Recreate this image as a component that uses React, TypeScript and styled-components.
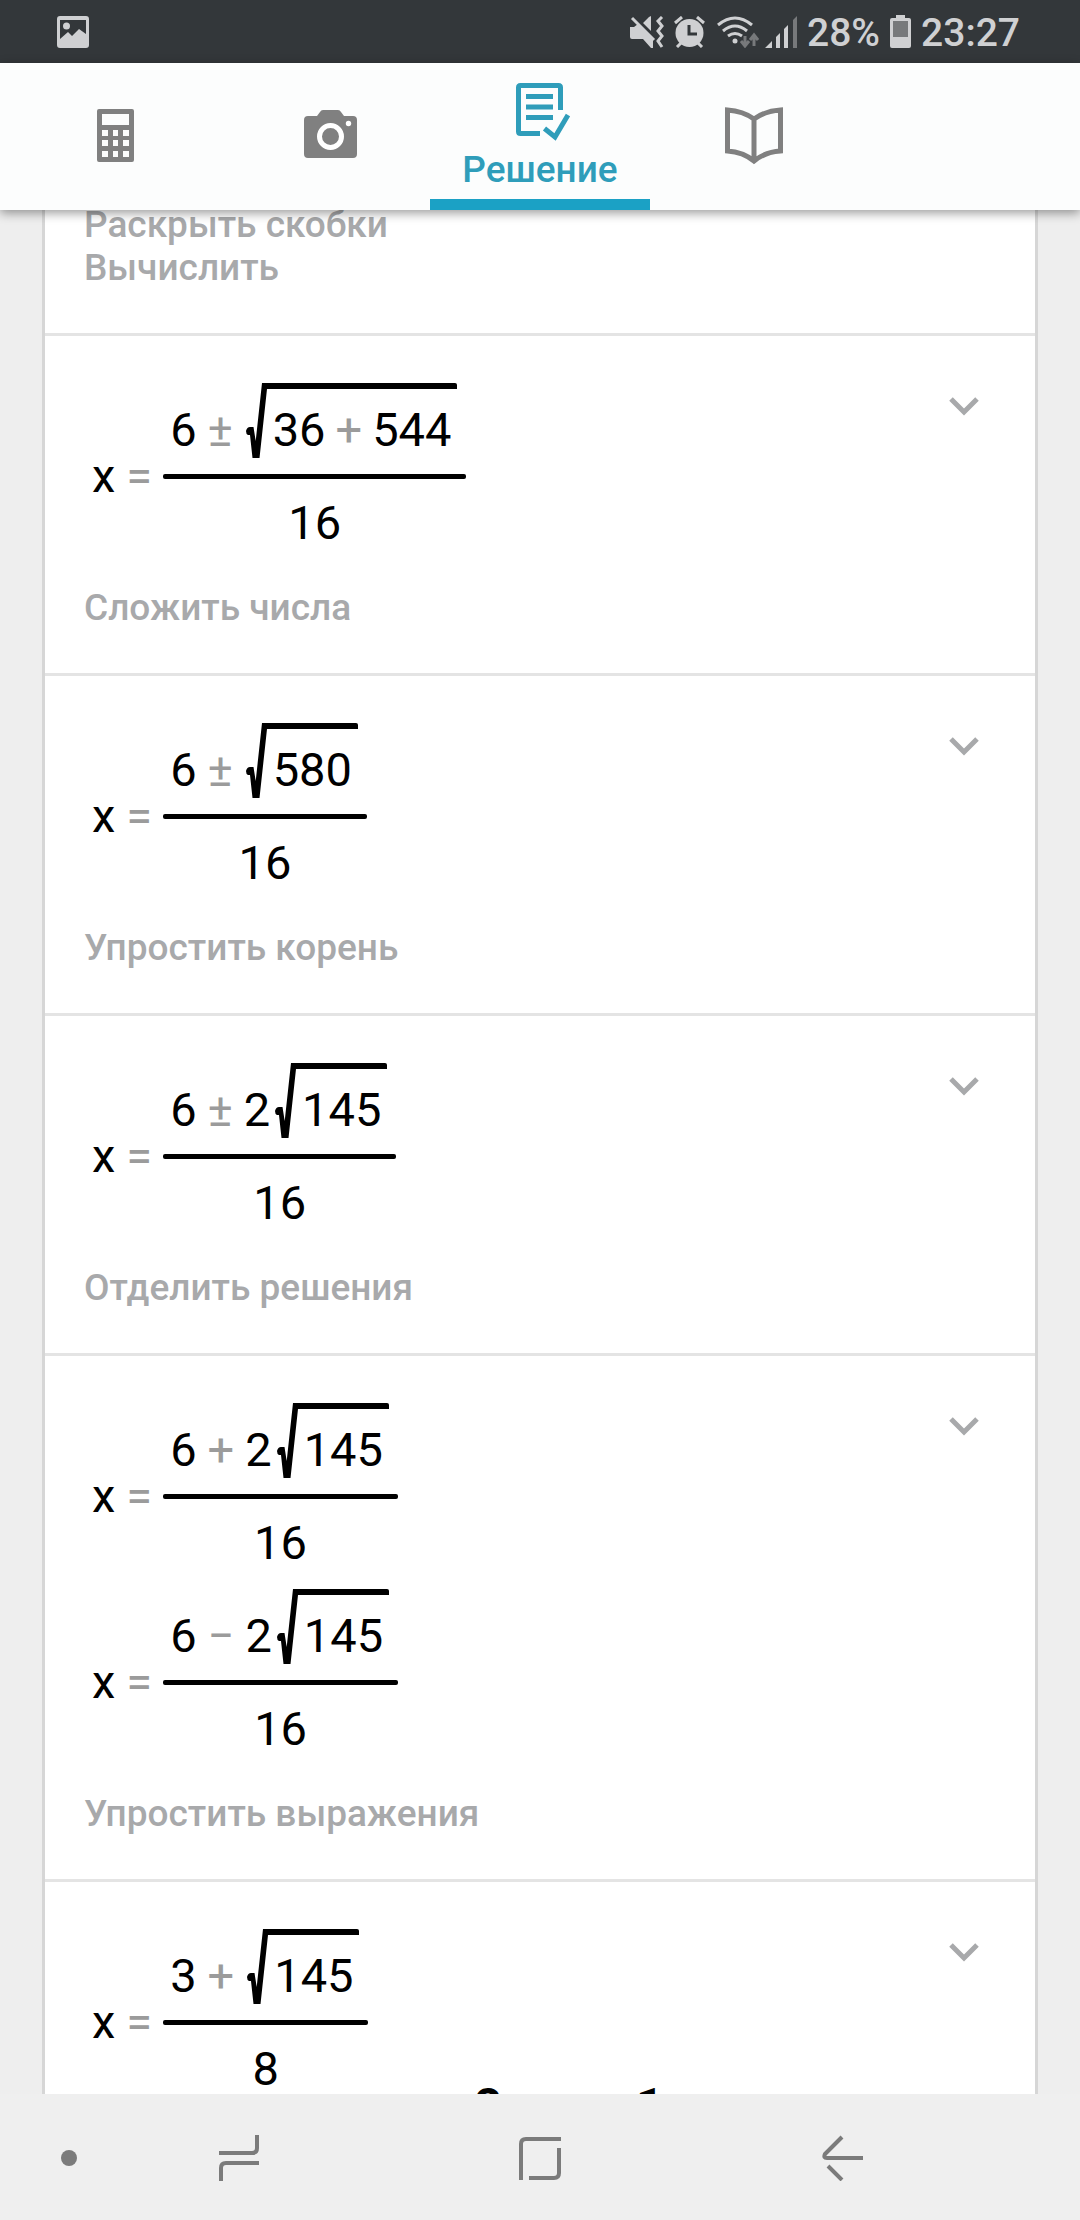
import React from "react";
import styled, { createGlobalStyle } from "styled-components";

const GlobalStyle = createGlobalStyle`
  * { box-sizing: border-box; }
  body { margin: 0; background: #eeeeee; font-family: Roboto, "Noto Sans", sans-serif; }
  button { border: 0; padding: 0; background: none; font: inherit; color: inherit; cursor: pointer; }
  svg { display: block; flex: none; }
`;

const Screen = styled.div`
  display: flex;
  flex-direction: column;
  height: 100vh;
  overflow: hidden;
`;

/* status bar */
const StatusBar = styled.div`
  flex: none;
  display: flex;
  align-items: center;
  justify-content: space-between;
  height: 63px;
  padding: 0 60px 0 57px;
  background: #33373a;
  color: #cfd0d2;
`;
const StatusGroup = styled.div<{ $gap: number }>`
  display: flex;
  align-items: center;
  gap: ${(p) => p.$gap}px;
`;
const StatusText = styled.span`
  font-size: 39px;
  font-weight: 500;
  line-height: 48px;
  padding-top: 2px;
`;

/* tabs */
const Tabs = styled.nav`
  flex: none;
  position: relative;
  z-index: 1;
  display: grid;
  grid-template-columns: 230fr 200fr 220fr 207fr 223fr;
  height: 147px;
  background: #fcfdfd;
  box-shadow: 0 3px 10px rgba(0, 0, 0, 0.4);
`;
const Tab = styled.button<{ $active?: boolean }>`
  display: flex;
  flex-direction: column;
  align-items: center;
  justify-content: ${(p) => (p.$active ? "flex-end" : "center")};
  gap: 8px;
  padding-bottom: ${(p) => (p.$active ? "0" : "2px")};
  color: ${(p) => (p.$active ? "#2f9dba" : "#808080")};
  border-bottom: ${(p) => (p.$active ? "11px solid #1ba1c5" : "0")};
`;
const TabLabel = styled.span`
  font-size: 37px;
  font-weight: 500;
  line-height: 42px;
  padding-bottom: 8px;
`;

/* steps */
const Scroller = styled.main`
  flex: 1;
  min-height: 0;
  position: relative;
  overflow: hidden;
  padding: 0 42px;
`;
const Steps = styled.ol`
  list-style: none;
  margin: -7px 0 0;
  padding: 0;
  background: #ffffff;
  border: solid #d6d6d6;
  border-width: 0 3px;
`;
const Step = styled.li`
  display: flex;
  justify-content: space-between;
  align-items: flex-start;
  border-bottom: 3px solid #e4e4e4;
`;
const StepBody = styled.div<{ $captionsOnly?: boolean }>`
  padding: ${(p) => (p.$captionsOnly ? "0" : "47px")} 0 44px 39px;
`;
const Caption = styled.p`
  margin: 0;
  font-size: 37px;
  font-weight: 500;
  line-height: 43px;
  color: #a8a9ab;
`;
const Equations = styled.div`
  padding: 0 0 17px 8px;
`;
const Expand = styled.button`
  padding: 48px 48px;
  color: #a8a9ab;
`;
const Peek = styled.div`
  position: absolute;
  left: 58px;
  right: 0;
  bottom: -40px;
  display: flex;
  justify-content: center;
  gap: 134px;
  font-size: 48px;
  font-weight: 700;
  line-height: 56px;
  color: #000000;
`;

/* maths */
const Row = styled.div`
  display: flex;
  align-items: center;
  gap: 11px;
  font-size: 47px;
  line-height: 56px;
  color: #000000;
`;
const Operator = styled.span`
  color: #9b9b9b;
`;
const Fraction = styled.div`
  display: flex;
  flex-direction: column;
  align-items: center;
`;
const Numerator = styled.div`
  display: flex;
  align-items: flex-end;
  gap: 11px;
  padding: 0 9px 16px 7px;
`;
const Bar = styled.div`
  align-self: stretch;
  height: 5px;
  border-radius: 2px;
  background: #000000;
`;
const Denominator = styled.div`
  padding: 16px 0 18px;
`;
const Term = styled.span`
  display: flex;
  align-items: flex-end;
  gap: 3px;
`;
const Root = styled.span`
  display: flex;
`;
const Radicand = styled.span`
  display: flex;
  gap: 10px;
  margin-left: -10px;
  padding: 13px 6px 0 10px;
  border-top: 6px solid #000000;
  border-radius: 0 2px 2px 0;
`;

/* system navigation */
const SystemNav = styled.nav`
  flex: none;
  display: grid;
  grid-template-columns: 138fr 201fr 402fr 203fr 136fr;
  height: 126px;
  background: #efefef;
  color: #7b7b7b;
`;
const NavButton = styled.button`
  display: flex;
  align-items: center;
  justify-content: center;
  padding-top: 2px;
`;

type Expression = {
  left: string;
  sign: string;
  factor?: string;
  root: string[];
  under: string;
};

const isOperator = (s: string) => s === "+" || s === "−" || s === "±";

function Equation({ left, sign, factor, root, under }: Expression) {
  return (
    <Row>
      <span>x</span>
      <Operator>=</Operator>
      <Fraction>
        <Numerator>
          <span>{left}</span>
          <Operator>{sign}</Operator>
          <Term>
            {factor && <span>{factor}</span>}
            <Root>
              <svg width="29" height="75" viewBox="0 0 29 75" aria-hidden="true">
                <path d="M18 0h11v6h-6L15.500 75h-7L6 52H4q-2-1-2-4 1-4 4-4h3.500l2.200 14L18 0z" fill="#000" />
              </svg>
              <Radicand>
                {root.map((part, i) =>
                  isOperator(part) ? <Operator key={i}>{part}</Operator> : <span key={i}>{part}</span>
                )}
              </Radicand>
            </Root>
          </Term>
        </Numerator>
        <Bar />
        <Denominator>{under}</Denominator>
      </Fraction>
    </Row>
  );
}

const steps: { equations: Expression[]; captions: string[] }[] = [
  { equations: [], captions: ["Раскрыть скобки", "Вычислить"] },
  {
    equations: [{ left: "6", sign: "±", root: ["36", "+", "544"], under: "16" }],
    captions: ["Сложить числа"],
  },
  { equations: [{ left: "6", sign: "±", root: ["580"], under: "16" }], captions: ["Упростить корень"] },
  {
    equations: [{ left: "6", sign: "±", factor: "2", root: ["145"], under: "16" }],
    captions: ["Отделить решения"],
  },
  {
    equations: [
      { left: "6", sign: "+", factor: "2", root: ["145"], under: "16" },
      { left: "6", sign: "−", factor: "2", root: ["145"], under: "16" },
    ],
    captions: ["Упростить выражения"],
  },
  { equations: [{ left: "3", sign: "+", root: ["145"], under: "8" }], captions: [] },
];

export default function App() {
  return (
    <Screen>
      <GlobalStyle />
      <StatusBar>
        <svg width="32" height="32" viewBox="0 0 32 32" fill="currentColor">
          <path fillRule="evenodd" d="M3 0h26a3 3 0 0 1 3 3v26a3 3 0 0 1-3 3H3a3 3 0 0 1-3-3V3a3 3 0 0 1 3-3zm0 4v19l8-7 4 4 7-7 7 5V4z" />
          <circle cx="9.500" cy="10" r="3.500" />
        </svg>
        <StatusGroup $gap={10}>
          <svg width="34" height="32" viewBox="0 0 34 32">
            <path d="M0 11h4l4-3 15 15v9h-2l-8-9H2q-2 0-2-2zM21 0v15l-8-8 6-6z" fill="currentColor" />
            <path d="M4 1l22 22" stroke="#33373a" strokeWidth="2" />
            <path d="M2 2l22 22" stroke="currentColor" strokeWidth="3" />
            <path d="M32 1l-4 4 4 5-4 5 4 5-4 5 4 6" fill="none" stroke="currentColor" strokeWidth="3" />
          </svg>
          <svg width="31" height="32" viewBox="0 0 31 32">
            <path d="M1 7l7-6M30 7l-7-6M3 31l5-5M28 31l-5-5" stroke="currentColor" strokeWidth="3" />
            <circle cx="15.500" cy="17" r="14" fill="currentColor" />
            <path d="M15 9v9h8" fill="none" stroke="#33373a" strokeWidth="3" />
          </svg>
          <StatusGroup $gap={6}>
            <svg width="44" height="32" viewBox="-2 0 44 32" fill="none" stroke="currentColor" strokeWidth="3">
              <path d="M1 9q17-14 34 0M6 15q12-10 24 0M11 20q7-5 14 0" />
              <circle cx="18" cy="25" r="2.500" fill="currentColor" stroke="none" />
              <path d="M28 20v9M24 25l4 5 4-5M37 30v-10M33 24l4-5 4 5" stroke="#77797b" />
            </svg>
            <svg width="32" height="32" viewBox="0 0 32 32" fill="currentColor">
              <path d="M0 32l7-7v7zM11 21l4-4v15h-4zM19 13l4-4v23h-4z" />
              <path d="M28 4l4-4v32h-4z" fill="#77797b" />
            </svg>
          </StatusGroup>
          <StatusText>28%</StatusText>
          <svg width="21" height="33" viewBox="0 0 21 33">
            <path d="M6 0h9v3h4q2 0 2 2v26q0 2-2 2H2q-2 0-2-2V5q0-2 2-2h4z" fill="currentColor" />
            <path d="M3 6h15v16H3z" fill="#77797b" />
          </svg>
          <StatusText>23:27</StatusText>
        </StatusGroup>
      </StatusBar>

      <Tabs>
        <Tab aria-label="Калькулятор">
          <svg width="37" height="53" viewBox="0 0 37 53" fill="currentColor">
            <path
              fillRule="evenodd"
              d="M2 0h33a2 2 0 0 1 2 2v49a2 2 0 0 1-2 2H2a2 2 0 0 1-2-2V2a2 2 0 0 1 2-2zM5 5v11h27V5zM5 21v6h6v-6zM16 21v6h5v-6zM26 21v6h6v-6zM5 31v6h6v-6zM16 31v6h5v-6zM26 31v6h6v-6zM5 42v6h6v-6zM16 42v6h5v-6zM26 42v6h6v-6z"
            />
          </svg>
        </Tab>
        <Tab aria-label="Камера">
          <svg width="53" height="52" viewBox="0 0 53 52">
            <path
              d="M19 0h15q2 0 3 2l3 4h9q4 0 4 4v34q0 4-4 4H4q-4 0-4-4V10q0-4 4-4h9l3-4q1-2 3-2z"
              fill="currentColor"
            />
            <circle cx="26.500" cy="26.500" r="11" fill="none" stroke="#fff" strokeWidth="5" />
            <circle cx="44.500" cy="13.500" r="2.700" fill="#fff" />
          </svg>
        </Tab>
        <Tab $active>
          <svg width="60" height="58" viewBox="0 0 60 58" fill="none" stroke="currentColor" strokeWidth="5">
            <path d="M30 50.500H10.500q-2 0-2-2V4.500q0-2 2-2h38q2 0 2 2V27" />
            <path d="M16 13.500h27M16 24h27M16 34.500h27" />
            <path d="M34.500 45.500L45 54 58 32" />
          </svg>
          <TabLabel>Решение</TabLabel>
        </Tab>
        <Tab aria-label="Учебник">
          <svg width="58" height="58" viewBox="0 0 58 58" fill="none" stroke="currentColor" strokeWidth="5">
            <path d="M29 12Q18 4 2.500 3v41Q18 45 29 54Q40 45 55.500 44V3Q40 4 29 12zV54" />
          </svg>
        </Tab>
      </Tabs>

      <Scroller>
        <Steps>
          {steps.map((step, i) => (
            <Step key={i}>
              <StepBody $captionsOnly={step.equations.length === 0}>
                {step.equations.length > 0 && (
                  <Equations>
                    {step.equations.map((eq, j) => (
                      <Equation key={j} {...eq} />
                    ))}
                  </Equations>
                )}
                {step.captions.map((c) => (
                  <Caption key={c}>{c}</Caption>
                ))}
              </StepBody>
              {step.equations.length > 0 && (
                <Expand aria-label="Подробнее">
                  <svg width="46" height="46" viewBox="0 0 46 46" fill="none" stroke="currentColor" strokeWidth="5">
                    <path d="M10 15l13 13 13-13" />
                  </svg>
                </Expand>
              )}
            </Step>
          ))}
        </Steps>
        <Peek>
          <span>2</span>
          <span>1</span>
        </Peek>
      </Scroller>

      <SystemNav>
        <NavButton aria-label="Скрыть панель">
          <svg width="16" height="16" viewBox="0 0 16 16">
            <circle cx="8" cy="8" r="8" fill="currentColor" />
          </svg>
        </NavButton>
        <NavButton aria-label="Недавние">
          <svg width="40" height="46" viewBox="0 0 40 46" fill="none" stroke="currentColor" strokeWidth="4">
            <path d="M0 18h33q5 0 5-5V0M40 28H7q-5 0-5 5v13" />
          </svg>
        </NavButton>
        <NavButton aria-label="Домой">
          <svg width="42" height="43" viewBox="0 0 42 43" fill="none" stroke="currentColor" strokeWidth="4">
            <path d="M2 43V7q0-5 5-5h35M10 41h25q5 0 5-5V11" />
          </svg>
        </NavButton>
        <NavButton aria-label="Назад">
          <svg width="42" height="46" viewBox="0 0 42 46" fill="none" stroke="currentColor" strokeWidth="4">
            <path d="M20 2L3 19q-2 4 2 4h36M6 31l14 14" />
          </svg>
        </NavButton>
      </SystemNav>
    </Screen>
  );
}
